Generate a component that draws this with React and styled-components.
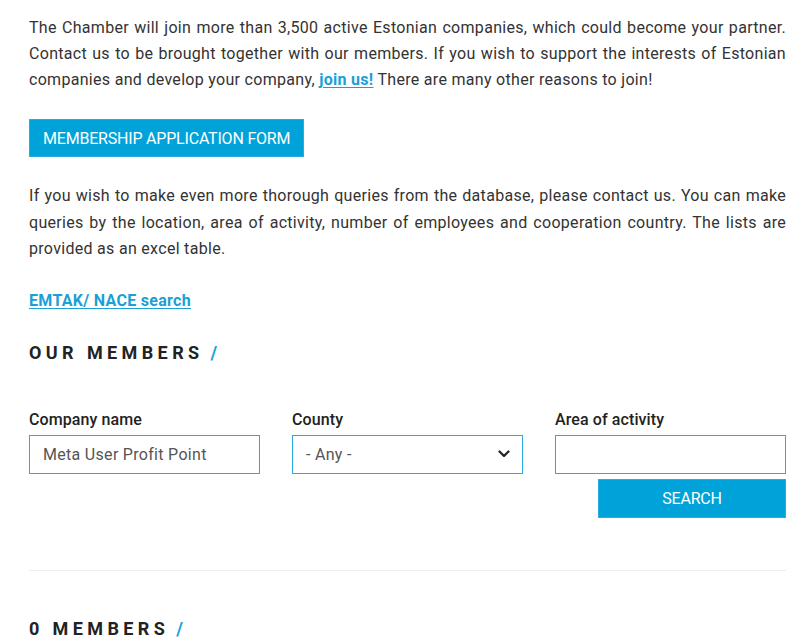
import React from "react";
import styled, { createGlobalStyle } from "styled-components";

const Global = createGlobalStyle`
  html, body { margin: 0; padding: 0; background: #fff; }
  body { font-family: Roboto, "Noto Sans", sans-serif; color: #333; letter-spacing: 0.3px; }
  * { box-sizing: border-box; }
`;

const Page = styled.div`
  width: 800px;
  padding: 15px 14px 0 29px;
`;

const Para = styled.p`
  margin: 0;
  font-size: 16px;
  line-height: ${(p) => p.$lh || 26}px;
  text-align: justify;
  color: #333;
`;

const Link = styled.a`
  color: #1a9fd6;
  font-weight: 700;
  text-decoration: underline;
  text-underline-offset: 2px;
`;

const PrimaryButton = styled.button`
  display: inline-flex;
  align-items: center;
  justify-content: center;
  height: ${(p) => p.$height || "38px"};
  width: ${(p) => p.$width || "auto"};
  padding: 0 13px;
  border: 1px solid #29abe2;
  background: #00a3d9;
  color: #fff;
  font-family: inherit;
  font-size: 16px;
  letter-spacing: -0.2px;
  text-transform: uppercase;
  cursor: pointer;
`;

const ButtonRow = styled.div`
  margin: 26px 0;
  display: flex;
`;

const LinkLine = styled.div`
  margin-top: 25px;
  font-size: 16px;
  line-height: 26px;
`;

const Heading = styled.h2`
  margin: ${(p) => p.$margin || "0"};
  font-size: 18px;
  line-height: 24px;
  font-weight: 700;
  letter-spacing: 4.4px;
  color: #222;
  text-transform: uppercase;
  display: flex;
  align-items: baseline;
`;

const Slash = styled.span`
  color: #1a9fd6;
  letter-spacing: 0;
  margin-left: 7px;
`;

const FormGrid = styled.div`
  margin-top: 43px;
  display: grid;
  grid-template-columns: repeat(3, 1fr);
  column-gap: 32px;
`;

const Field = styled.label`
  display: flex;
  flex-direction: column;
  gap: 3px;
`;

const Label = styled.span`
  font-size: 16px;
  line-height: 24px;
  font-weight: 500;
  color: #222;
  letter-spacing: 0.1px;
`;

const Input = styled.input`
  height: 39px;
  width: 100%;
  border: 1px solid #29abe2;
  padding: 0 13px;
  font-family: inherit;
  font-size: 16px;
  letter-spacing: 0.3px;
  color: #555;
  outline: none;
`;

const SelectBox = styled.div`
  height: 39px;
  border: 1px solid #29abe2;
  display: flex;
  align-items: center;
  justify-content: space-between;
  padding: 0 12px 0 13px;
  font-size: 16px;
  color: #555;
`;

const SearchRow = styled.div`
  display: flex;
  justify-content: flex-end;
  margin-top: 2px;
`;

const Divider = styled.hr`
  margin: 52px 0 0;
  border: 0;
  border-top: 1px solid #eee;
`;

const Chevron = () => (
  <svg width="12" height="8" viewBox="0 0 12 8" fill="none">
    <path d="M1.5 1.5 L6 6 L10.5 1.5" stroke="#222" strokeWidth="2.2" strokeLinecap="round" strokeLinejoin="round" />
  </svg>
);

export default function App() {
  return (
    <>
      <Global />
      <Page>
        <Para>
          The Chamber will join more than 3,500 active Estonian companies, which could become your partner.
          Contact us to be brought together with our members. If you wish to support the interests of Estonian
          companies and develop your company, <Link href="#">join us!</Link> There are many other reasons to join!
        </Para>
        <ButtonRow>
          <PrimaryButton>Membership application form</PrimaryButton>
        </ButtonRow>
        <Para $lh={26.5}>
          If you wish to make even more thorough queries from the database, please contact us. You can make
          queries by the location, area of activity, number of employees and cooperation country. The lists are
          provided as an excel table.
        </Para>
        <LinkLine>
          <Link href="#">EMTAK/ NACE search</Link>
        </LinkLine>
        <Heading $margin="27px 0 0">
          Our members<Slash>/</Slash>
        </Heading>
        <FormGrid>
          <Field>
            <Label>Company name</Label>
            <Input defaultValue="Meta User Profit Point" />
          </Field>
          <Field>
            <Label>County</Label>
            <SelectBox>
              <span>- Any -</span>
              <Chevron />
            </SelectBox>
          </Field>
          <Field>
            <Label>Area of activity</Label>
            <Input />
            <SearchRow>
              <PrimaryButton $width="188px" $height="39px">Search</PrimaryButton>
            </SearchRow>
          </Field>
        </FormGrid>
        <Divider />
        <Heading $margin="46px 0 0">
          0 members<Slash>/</Slash>
        </Heading>
      </Page>
    </>
  );
}
